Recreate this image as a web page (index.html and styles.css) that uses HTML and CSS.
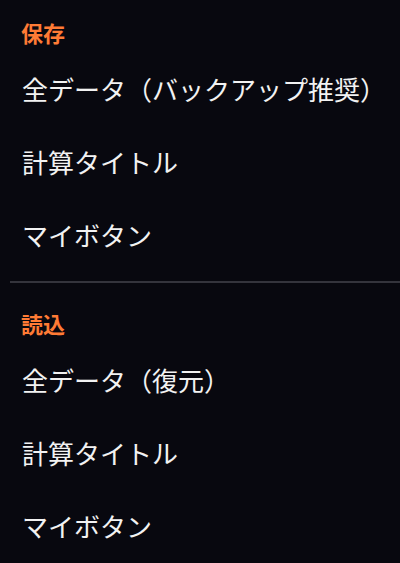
FILE: index.html
```html
<!DOCTYPE html>
<html lang="ja">
<head>
<meta charset="utf-8">
<link rel="stylesheet" href="styles.css">
</head>
<body>
<div class="menu">
  <section class="group">
    <div class="group-title">保存</div>
    <div class="item">全データ（バックアップ推奨）</div>
    <div class="item">計算タイトル</div>
    <div class="item">マイボタン</div>
  </section>
  <hr class="divider">
  <section class="group">
    <div class="group-title">読込</div>
    <div class="item">全データ（復元）</div>
    <div class="item">計算タイトル</div>
    <div class="item">マイボタン</div>
  </section>
</div>
</body>
</html>
```
FILE: styles.css
```css
html, body {
  margin: 0;
  padding: 0;
  background: #08080f;
}
body {
  width: 400px;
  height: 563px;
  overflow: hidden;
  font-family: "Noto Sans CJK JP", "Noto Sans", sans-serif;
  color: #f2f2f2;
}
.menu {
  display: flex;
  flex-direction: column;
}
.group {
  display: flex;
  flex-direction: column;
  padding-left: 22px;
}
.group-title {
  color: #ff7b35;
  font-weight: 700;
  font-size: 22px;
  line-height: 28px;
  padding-top: 18px;
  margin-bottom: 6px;
  margin-left: -1px;
}
.item {
  font-size: 26px;
  line-height: 73px;
  white-space: nowrap;
}
.divider {
  border: 0;
  height: 2px;
  background: #34343c;
  margin: 10px 0 8px 10px;
}
```
